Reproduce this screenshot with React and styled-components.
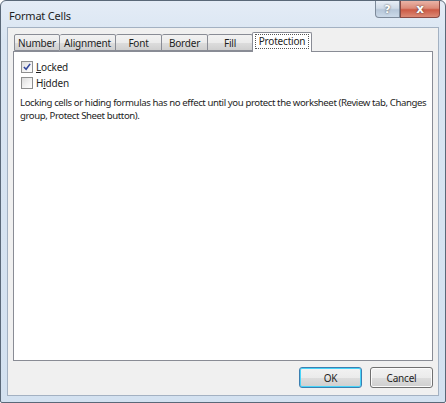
import React from "react";
import styled, { createGlobalStyle } from "styled-components";

const GlobalStyle = createGlobalStyle`
  html, body {
    margin: 0;
    padding: 0;
    background: #ffffff;
  }
  body {
    font-family: "Noto Sans", "Open Sans", sans-serif;
  }
`;

const tabs = [
  { label: "Number", w: 46 },
  { label: "Alignment", w: 56 },
  { label: "Font", w: 46 },
  { label: "Border", w: 46 },
  { label: "Fill", w: 45 },
  { label: "Protection", w: 60, active: true },
];

const Window = styled.div`
  width: 446px;
  height: 403px;
  box-sizing: border-box;
  border: 1px solid #5a6878;
  border-radius: 6px 6px 2px 2px;
  background: linear-gradient(to bottom, #e4ecf6 0px, #d9e5f2 40px, #d3e1f0 100%);
  display: flex;
  flex-direction: column;
  padding: 0 6px 6px 6px;
`;

const TitleBar = styled.div`
  height: 26px;
  display: flex;
  align-items: flex-start;
  justify-content: space-between;
`;

const Title = styled.span`
  margin-top: 7px;
  margin-left: 2px;
  font-size: 11px;
  letter-spacing: -0.2px;
  color: #1e1e1e;
`;

const CaptionButtons = styled.div`
  display: flex;
  margin-right: -1px;
`;

const CaptionButton = styled.div`
  width: ${(p) => p.w}px;
  height: 17px;
  box-sizing: border-box;
  border: 1px solid ${(p) => (p.close ? "#8a4a44" : "#7d8a9a")};
  border-top: none;
  border-radius: ${(p) => (p.close ? "0 0 4px 0" : "0 0 0 4px")};
  background: ${(p) =>
    p.close
      ? "linear-gradient(to bottom, #eab3a6 0%, #dc8b79 45%, #cc5a45 55%, #dc8a76 100%)"
      : "linear-gradient(to bottom, #e8eef6 0%, #cfdae7 45%, #b6c6d8 55%, #cbd9e8 100%)"};
  display: flex;
  align-items: center;
  justify-content: center;
  color: #ffffff;
  font-family: "DejaVu Sans", sans-serif;
  font-weight: bold;
  font-size: ${(p) => (p.close ? 12 : 11)}px;
  text-shadow: 0 0 2px #3a3a3a;
`;

const Client = styled.div`
  flex: 1;
  background: #f0f0f0;
  border: 1px solid #a3b1c2;
  display: flex;
  flex-direction: column;
  padding: 4px 5px 7px 5px;
`;

const TabRow = styled.div`
  display: flex;
  align-items: flex-end;
  height: 19px;
  padding-left: 1px;
  position: relative;
  z-index: 1;
`;

const Tab = styled.div`
  box-sizing: border-box;
  width: ${(p) => p.w}px;
  height: ${(p) => (p.active ? 20 : 17)}px;
  margin-bottom: ${(p) => (p.active ? -1 : 0)}px;
  border: 1px solid #898c95;
  border-bottom: ${(p) => (p.active ? "none" : "1px solid #898c95")};
  border-left: ${(p) => (p.first || p.active ? "1px solid #898c95" : "none")};
  border-radius: 2px 2px 0 0;
  background: ${(p) =>
    p.active
      ? "#ffffff"
      : "linear-gradient(to bottom, #f2f2f2 0%, #ebebeb 50%, #dddddd 51%, #cfcfcf 100%)"};
  display: flex;
  align-items: ${(p) => (p.active ? "flex-start" : "center")};
  justify-content: center;
  font-size: 10px;
  letter-spacing: -0.2px;
  color: #1e1e1e;
  ${(p) => p.active && "margin-left: -1px;"}
`;

const FocusLabel = styled.span`
  margin-top: 2px;
  padding: 0 3px;
  line-height: 13px;
  outline: 1px dotted #555555;
`;

const Panel = styled.div`
  flex: 1;
  background: #ffffff;
  border: 1px solid #898c95;
  padding: 9px 6px;
  display: flex;
  flex-direction: column;
`;

const CheckRow = styled.label`
  display: flex;
  align-items: center;
  gap: 3px;
  height: 12px;
  margin-bottom: 4px;
  padding-left: 1px;
  font-size: 10px;
  letter-spacing: -0.2px;
  color: #1e1e1e;
`;

const Box = styled.span`
  width: 12px;
  height: 12px;
  box-sizing: border-box;
  border: 1px solid #8e8f8f;
  background: linear-gradient(135deg, #dcdcdc 0%, #f4f4f4 60%, #ffffff 100%);
  display: flex;
  align-items: center;
  justify-content: center;
`;

const Key = styled.span`
  text-decoration: underline;
`;

const Note = styled.p`
  margin: 3px 0 0 0;
  font-size: 9.6px;
  letter-spacing: -0.4px;
  line-height: 13px;
  white-space: nowrap;
  color: #1e1e1e;
`;

const Footer = styled.div`
  display: flex;
  justify-content: flex-end;
  gap: 8px;
  padding-top: 6px;
`;

const Button = styled.button`
  width: 63px;
  height: 21px;
  box-sizing: border-box;
  border: 1px solid ${(p) => (p.primary ? "#3c7fb1" : "#707070")};
  border-radius: 3px;
  background: linear-gradient(to bottom, #f2f2f2 0%, #ebebeb 50%, #dddddd 51%, #cfcfcf 100%);
  box-shadow: inset 0 0 0 1px ${(p) => (p.primary ? "#48d4f9" : "#fbfbfb")};
  font-family: "Noto Sans", "Open Sans", sans-serif;
  font-size: 10px;
  letter-spacing: -0.2px;
  color: #1e1e1e;
  padding: 0;
`;

const Check = () => (
  <svg width="8" height="8" viewBox="0 0 9 9">
    <path d="M1 4.5 L3.5 7 L8 1" fill="none" stroke="#31469c" strokeWidth="1.8" />
  </svg>
);

export default function App() {
  return (
    <>
      <GlobalStyle />
      <Window>
        <TitleBar>
          <Title>Format Cells</Title>
          <CaptionButtons>
            <CaptionButton w={25}>?</CaptionButton>
            <CaptionButton w={40} close>
              x
            </CaptionButton>
          </CaptionButtons>
        </TitleBar>
        <Client>
          <TabRow>
            {tabs.map((t, i) => (
              <Tab key={t.label} first={i === 0} active={t.active} w={t.w}>
                {t.active ? <FocusLabel>{t.label}</FocusLabel> : t.label}
              </Tab>
            ))}
          </TabRow>
          <Panel>
            <CheckRow>
              <Box>
                <Check />
              </Box>
              <span>
                <Key>L</Key>ocked
              </span>
            </CheckRow>
            <CheckRow>
              <Box />
              <span>
                H<Key>i</Key>dden
              </span>
            </CheckRow>
            <Note>
              Locking cells or hiding formulas has no effect until you protect the worksheet (Review tab, Changes
              <br />
              group, Protect Sheet button).
            </Note>
          </Panel>
          <Footer>
            <Button primary>OK</Button>
            <Button>Cancel</Button>
          </Footer>
        </Client>
      </Window>
    </>
  );
}
